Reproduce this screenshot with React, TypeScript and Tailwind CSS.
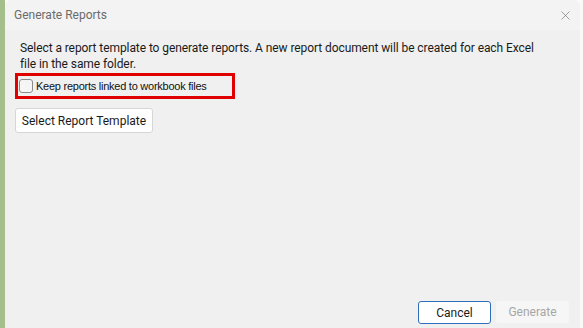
import { X } from "lucide-react";

const ui = "font-['Segoe_UI',Roboto,'Noto_Sans',sans-serif]";

export default function App() {
  return (
    <div className="flex h-[328px] w-[583px] overflow-hidden bg-[#f9f9f9]">
      <div className="w-[5px] shrink-0 bg-[#a4bf8c]" />
      <div className={`flex w-[575px] shrink-0 flex-col rounded-t-[7px] bg-[#f0f0f0] ${ui}`}>
        <div className="flex h-[30px] shrink-0 items-center justify-between rounded-t-[7px] bg-[#f3f3f3] pl-[9px] pr-[7px]">
          <span className="text-[12px] text-[#6b6b6b]">Generate Reports</span>
          <X className="h-[15px] w-[15px] text-[#6a6a6a]" strokeWidth={1} />
        </div>
        <div className="flex flex-1 flex-col px-[10px] pt-[10px] pb-[4px]">
          <p className="w-[535px] pl-[5px] text-[12px] leading-[16px] tracking-[-0.08px] text-[#1a1a1a]">
            Select a report template to generate reports. A new report document will be created for each Excel file in the same folder.
          </p>
          <div className="mt-[1px] flex h-[26px] w-[220px] items-center gap-[3px] border-[3px] border-[#e00000] pl-[1px]">
            <span className="h-[14px] w-[14px] rounded-[3px] border border-[#8a8a8a] bg-[#f5f5f5]" />
            <span className="font-['Liberation_Sans',Arial,sans-serif] text-[11px] tracking-[-0.25px] text-[#111]">
              Keep reports linked to workbook files
            </span>
          </div>
          <button className="mt-[9px] h-[25px] w-[138px] whitespace-nowrap rounded-[3px] border border-[#d6d6d6] bg-white text-[12px] text-[#1a1a1a]">
            Select Report Template
          </button>
          <div className="mt-auto flex justify-end gap-[5px] pr-[1px]">
            <button className="h-[23px] w-[73px] rounded-[3px] border border-[#2f6fbf] bg-white text-[12px] text-[#1a1a1a]">
              Cancel
            </button>
            <button className="h-[22px] w-[73px] rounded-[3px] bg-[#f6f6f6] text-[12px] text-[#a7a7a7]">
              Generate
            </button>
          </div>
        </div>
      </div>
    </div>
  );
}
